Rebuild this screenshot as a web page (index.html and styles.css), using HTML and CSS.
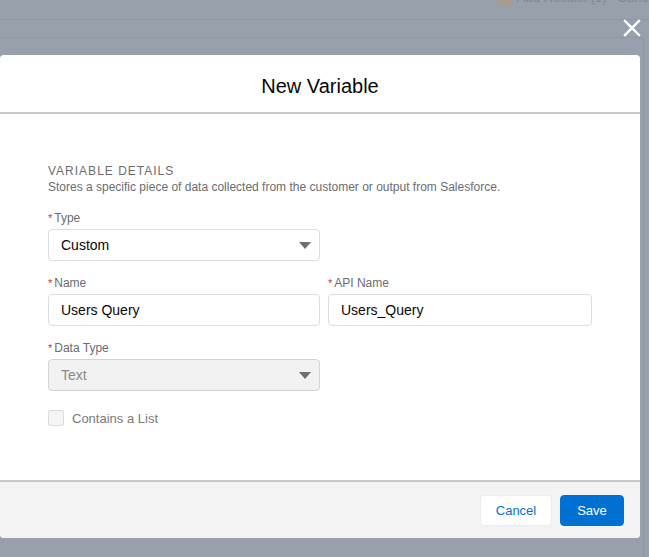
FILE: index.html
```html
<html lang="en">
<head>
    <title>New Variable</title>
    <meta charset="utf-8">
    <link rel="stylesheet" href="styles.css">
</head>

<body>
    <div class='backdrop'>
        <div class='topbar'>
            <span class='topbar-icon'></span>
            <span class='topbar-text'>Add Results (1)</span>
            <span class='topbar-text'>Cancel</span>
        </div>
        <div class='panel'></div>
    </div>

    <button class='close' aria-label='Close'>
        <svg width="18" height="18" viewBox="0 0 18 18">
            <path d="M2 2 L16 16 M16 2 L2 16" stroke="#fff" stroke-width="2.4" stroke-linecap="square" fill="none"/>
        </svg>
    </button>

    <div class='modal'>
        <div class='modal-header'>New Variable</div>

        <div class='modal-body'>
            <div class='section-title'>Variable Details</div>
            <div class='section-desc'>Stores a specific piece of data collected from the customer or output from Salesforce.</div>

            <div class='row'>
                <div class='field short'>
                    <label><abbr>*</abbr>Type</label>
                    <div class='select'>
                        <span>Custom</span>
                        <span class='arrow'></span>
                    </div>
                </div>
            </div>

            <div class='row'>
                <div class='field short'>
                    <label><abbr>*</abbr>Name</label>
                    <div class='input'>Users Query</div>
                </div>
                <div class='field wide'>
                    <label><abbr>*</abbr>API Name</label>
                    <div class='input'>Users_Query</div>
                </div>
            </div>

            <div class='row'>
                <div class='field short'>
                    <label><abbr>*</abbr>Data Type</label>
                    <div class='select disabled'>
                        <span>Text</span>
                        <span class='arrow'></span>
                    </div>
                </div>
            </div>

            <div class='check'>
                <span class='box'></span>
                <span>Contains a List</span>
            </div>
        </div>

        <div class='modal-footer'>
            <button class='btn btn-neutral'>Cancel</button>
            <button class='btn btn-brand'>Save</button>
        </div>
    </div>
</body>

</html>
```

FILE: styles.css
```css
body {
    background-color: #98a1ab;
    margin: 0px;
    padding: 0px;
    font-family: "Liberation Sans", Arial, sans-serif;
    width: 649px;
    height: 557px;
    overflow: hidden;
    position: relative;
}

/* page behind the overlay */
.backdrop {
    height: 557px;
}

.topbar {
    height: 19px;
    border-bottom: 1px solid #8e98a2;
    display: flex;
    align-items: flex-end;
    gap: 5px;
    padding-left: 497px;
    overflow: hidden;
    white-space: nowrap;
}

.topbar-icon {
    flex: none;
    width: 15px;
    height: 12px;
    background: #a99b8e;
    margin-bottom: 14px;
}

.topbar-text {
    font-size: 13px;
    line-height: 16px;
    color: #7e8791;
    margin-bottom: 13px;
    margin-right: 6px;
}

.panel {
    margin-top: 17px;
    width: 643px;
    height: 520px;
    border-top: 1px solid #8e98a2;
    border-right: 1px solid #8e98a2;
    border-top-right-radius: 4px;
}

.close {
    position: absolute;
    top: 18px;
    left: 622px;
    width: 20px;
    height: 20px;
    padding: 1px;
    border: 0;
    background: none;
}

/* modal */
.modal {
    position: absolute;
    top: 55px;
    left: 0px;
    width: 640px;
    background: #fff;
    border-radius: 4px;
}

.modal-header {
    height: 57px;
    border-bottom: 2px solid #c9c9c9;
    text-align: center;
    font-size: 20px;
    line-height: 62px;
    overflow: hidden;
    color: #080707;
}

.modal-body {
    height: 366px;
    padding: 49px 48px 0 48px;
    box-sizing: border-box;
}

.section-title {
    font-size: 12px;
    line-height: 16px;
    letter-spacing: 1px;
    text-transform: uppercase;
    color: #6b6d70;
}

.section-desc {
    font-size: 12px;
    line-height: 16px;
    color: #6b6d70;
}

.row {
    display: flex;
    gap: 8px;
    margin-top: 15px;
}

.row + .row {
    margin-top: 14px;
}

.field label {
    display: block;
    font-size: 12px;
    line-height: 16px;
    color: #6b6d70;
    margin-bottom: 3px;
}

.field abbr {
    color: #c23934;
    text-decoration: none;
    margin-right: 2px;
    font-size: 11px;
}

.short {
    width: 272px;
}

.wide {
    width: 264px;
}

.select,
.input {
    height: 32px;
    box-sizing: border-box;
    border: 1px solid #d8dde6;
    border-radius: 4px;
    padding: 0 12px;
    font-size: 14px;
    line-height: 30px;
    color: #080707;
    display: flex;
    justify-content: space-between;
    align-items: center;
}

.select.disabled {
    background: #f2f2f2;
    color: #8a8a8a;
    border-color: #d4d4d4;
}

.arrow {
    width: 0;
    height: 0;
    border-left: 6px solid transparent;
    border-right: 6px solid transparent;
    border-top: 7px solid #706e6b;
    margin-right: -4px;
}

.check {
    display: flex;
    align-items: center;
    gap: 8px;
    margin-top: 19px;
    font-size: 13px;
    color: #7a7a7a;
}

.check .box {
    width: 14px;
    height: 14px;
    border: 1px solid #dcdcdc;
    border-radius: 2px;
    background: #f5f5f5;
}

.modal-footer {
    height: 56px;
    border-top: 2px solid #c9c9c9;
    background: #f3f3f3;
    border-radius: 0 0 4px 4px;
    display: flex;
    justify-content: flex-end;
    align-items: center;
    gap: 8px;
    padding-right: 16px;
}

.btn {
    height: 31px;
    border-radius: 4px;
    font-family: "Liberation Sans", Arial, sans-serif;
    font-size: 13px;
    border: 1px solid transparent;
    padding: 0;
}

.btn-neutral {
    width: 72px;
    background: #fff;
    color: #0070d2;
    border-color: #ececec;
}

.btn-brand {
    width: 64px;
    background: #0070d2;
    color: #fff;
    border-color: #0070d2;
}
```
